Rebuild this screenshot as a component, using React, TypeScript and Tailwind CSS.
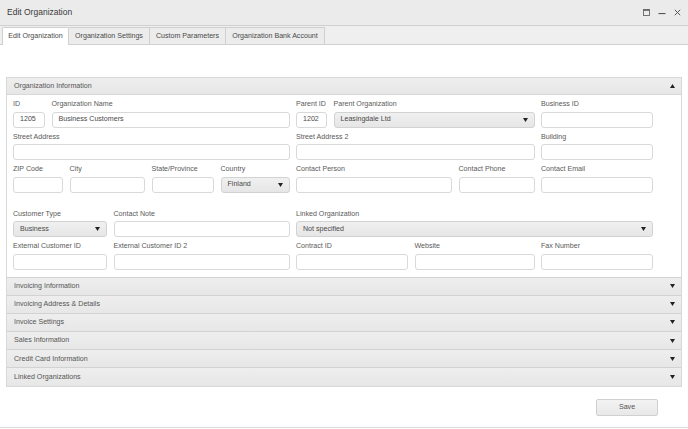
import React from 'react';

type Field = {
  label: string;
  w: number;
  value?: string;
  select?: boolean;
};

const rows: Field[][] = [
  [
    { label: 'ID', w: 32, value: '1205' },
    { label: 'Organization Name', w: 238, value: 'Business Customers' },
    { label: 'Parent ID', w: 31, value: '1202' },
    { label: 'Parent Organization', w: 201, value: 'Leasingdale Ltd', select: true },
    { label: 'Business ID', w: 112 },
  ],
  [
    { label: 'Street Address', w: 276.5 },
    { label: 'Street Address 2', w: 238.5 },
    { label: 'Building', w: 112 },
  ],
  [
    { label: 'ZIP Code', w: 50 },
    { label: 'City', w: 75.5 },
    { label: 'State/Province', w: 62.5 },
    { label: 'Country', w: 69, value: 'Finland', select: true },
    { label: 'Contact Person', w: 156 },
    { label: 'Contact Phone', w: 76 },
    { label: 'Contact Email', w: 112 },
  ],
];

const rows2: Field[][] = [
  [
    { label: 'Customer Type', w: 94, value: 'Business', select: true },
    { label: 'Contact Note', w: 176 },
    { label: 'Linked Organization', w: 357, value: 'Not specified', select: true },
  ],
  [
    { label: 'External Customer ID', w: 94 },
    { label: 'External Customer ID 2', w: 176 },
    { label: 'Contract ID', w: 112 },
    { label: 'Website', w: 120 },
    { label: 'Fax Number', w: 112 },
  ],
];

const sections = [
  'Invoicing Information',
  'Invoicing Address & Details',
  'Invoice Settings',
  'Sales Information',
  'Credit Card Information',
  'Linked Organizations',
];

const tabs = ['Edit Organization', 'Organization Settings', 'Custom Parameters', 'Organization Bank Account'];
const tabWidths = [67, 81, 76, 99];

// tiny solid caret used by selects and accordion headers
const Tri = ({ up = false }: { up?: boolean }) => (
  <svg width="5" height="4" viewBox="0 0 5 4" className="shrink-0">
    {up ? <polygon points="0,4 5,4 2.5,0" fill="#222" /> : <polygon points="0,0 5,0 2.5,4" fill="#222" />}
  </svg>
);

const FieldBox = ({ f }: { f: Field }) => (
  <div className="flex flex-col shrink-0" style={{ width: f.w }}>
    <div className="h-[16.5px] flex items-center pt-[3px] text-[7.1px] text-[#5a5a5a] whitespace-nowrap">{f.label}</div>
    {f.select ? (
      <div className="h-[16px] rounded-[3px] border border-[#d2d2d2] bg-gradient-to-b from-[#f0f0f0] to-[#e6e6e6] flex items-center justify-between pl-[6px] pr-[6px] text-[7.1px] text-[#4a4a4a]">
        <span>{f.value}</span>
        <Tri />
      </div>
    ) : (
      <div className="h-[16px] rounded-[3px] border border-[#d9d9d9] bg-white flex items-center pl-[6px] text-[7.1px] text-[#4a4a4a]">
        {f.value}
      </div>
    )}
  </div>
);

const Row = ({ fields }: { fields: Field[] }) => (
  <div className="flex gap-[6.5px]">
    {fields.map((f) => (
      <FieldBox key={f.label} f={f} />
    ))}
  </div>
);

export default function App() {
  return (
    <div
      className="w-[688px] h-[429px] bg-white flex flex-col overflow-hidden"
      style={{ fontFamily: '"Liberation Sans", Arial, sans-serif' }}
    >
      {/* Title bar */}
      <div className="h-[26px] shrink-0 bg-[#ebebeb] border-b border-[#d0d0d0] flex items-center justify-between pl-[7px] pr-[7px]">
        <span className="text-[8.5px] text-[#3a3a3a]">Edit Organization</span>
        <div className="flex items-center gap-[8px]">
          <svg width="7" height="7" viewBox="0 0 7 7">
            <rect x="0.5" y="0.5" width="6" height="6" fill="none" stroke="#666" strokeWidth="0.9" />
            <rect x="0.5" y="0.5" width="6" height="1.4" fill="#666" />
          </svg>
          <svg width="8" height="7" viewBox="0 0 8 7">
            <rect x="0.5" y="4" width="7" height="1.1" fill="#555" />
          </svg>
          <svg width="7" height="7" viewBox="0 0 7 7">
            <path d="M0.8 0.8 L6.2 6.2 M6.2 0.8 L0.8 6.2" stroke="#555" strokeWidth="1" />
          </svg>
        </div>
      </div>

      {/* Tabs */}
      <div className="h-[19px] shrink-0 bg-[#efefef] border-b border-[#d0d0d0] flex items-end pl-[2px]">
        {tabs.map((t, i) => (
          <div
            key={t}
            style={{ width: tabWidths[i] }}
            className={`flex items-center justify-center text-[7.1px] text-[#4a4a4a] border border-[#d0d0d0] border-b-0 ${
              i === 0 ? 'bg-white mb-[-1px] h-[18px] rounded-t-[2px]' : 'bg-[#ececec] border-l-0 h-[17px]'
            }`}
          >
            {t}
          </div>
        ))}
      </div>

      {/* Accordion */}
      <div className="mt-[32px] mx-[6px] border border-[#d8d8d8]">
        <div className="h-[17px] bg-gradient-to-b from-[#eeeeee] to-[#e7e7e7] border-b border-[#d8d8d8] flex items-center justify-between pl-[7px] pr-[6px] text-[7.1px] text-[#555]">
          <span>Organization Information</span>
          <Tri up />
        </div>
        <div className="pl-[6px] pb-[7px] flex flex-col">
          {rows.map((r, i) => (
            <Row key={i} fields={r} />
          ))}
          <div className="h-[12px]" />
          {rows2.map((r, i) => (
            <Row key={i} fields={r} />
          ))}
        </div>
        {sections.map((s) => (
          <div
            key={s}
            className="h-[18.2px] bg-gradient-to-b from-[#eeeeee] to-[#e7e7e7] border-t border-[#d2d2d2] flex items-center justify-between pl-[7px] pr-[6px] text-[7.1px] text-[#555]"
          >
            <span>{s}</span>
            <Tri />
          </div>
        ))}
      </div>

      {/* Footer */}
      <div className="flex justify-end pr-[30px] pt-[12px]">
        <button className="w-[62px] h-[17px] rounded-[2px] border border-[#d0d0d0] bg-gradient-to-b from-[#f3f3f3] to-[#e8e8e8] text-[7.1px] text-[#555]">
          Save
        </button>
      </div>
      <div className="mt-[11px] border-t border-[#d8d8d8]" />
    </div>
  );
}
